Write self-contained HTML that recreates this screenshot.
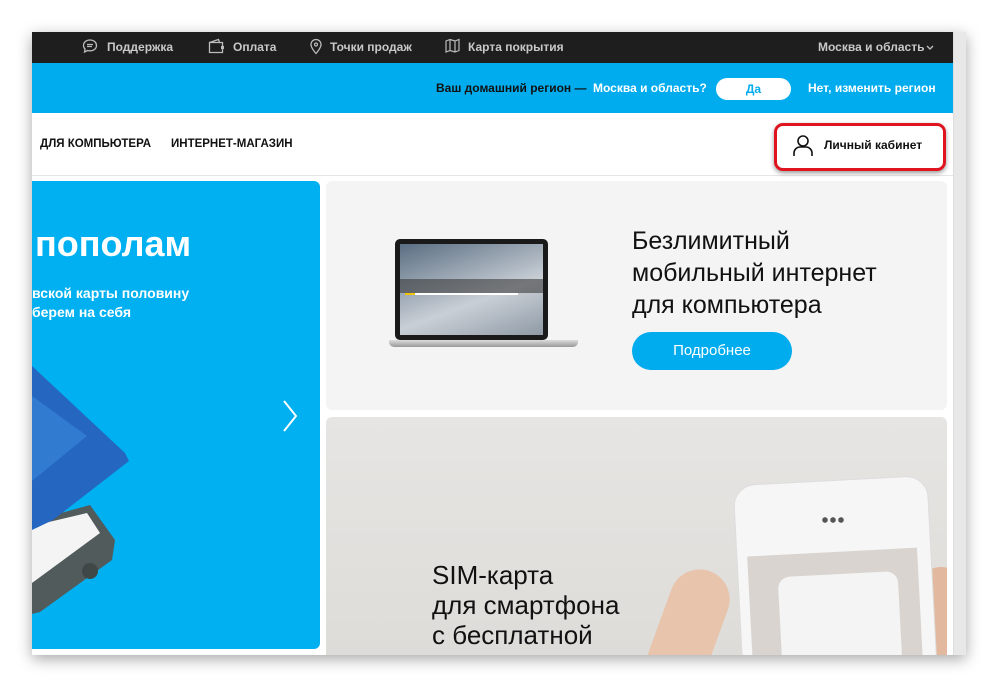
<!DOCTYPE html>
<html><head><meta charset="utf-8"><style>
*{margin:0;padding:0;box-sizing:border-box}
html,body{width:996px;height:686px;overflow:hidden}
body{background:#fff;font-family:"Liberation Sans",sans-serif;position:relative}
.frame{position:absolute;left:32px;top:32px;width:934px;height:623px;overflow:hidden;background:#fff;box-shadow:0 4px 14px rgba(0,0,0,.35)}
.top{position:absolute;left:0;top:0;width:921px;height:31px;background:#1e1e1e;color:#c8c8c8;font-size:12px;font-weight:bold}
.top span{position:absolute;top:8px}
.blue{position:absolute;left:0;top:31px;width:921px;height:50px;background:#00acee;color:#fff;font-size:12px;font-weight:bold}
.nav{position:absolute;left:0;top:81px;width:921px;height:63px;border-bottom:1px solid #e6e6e6;font-size:11.5px;font-weight:bold;color:#111}
.scroll{position:absolute;left:921px;top:0;width:13px;height:623px;background:#e8e8e8;border-left:1px solid #ddd}
.abs{position:absolute}
</style></head><body>
<div class="frame">
 <div class="top">
  <svg class="abs" style="left:50px;top:6px" width="16" height="16" viewBox="0 0 16 16"><path d="M8 2C4 2 1.5 4.5 1.5 7.5c0 1.5.6 2.7 1.6 3.6L2.5 14l3.2-1.5c.7.2 1.500.3 2.3.3 4 0 6.5-2.4 6.5-5.3S12 2 8 2z" fill="none" stroke="#bbb" stroke-width="1.3"/><path d="M5 6.5h6M5 8.5h5" stroke="#bbb" stroke-width="1.2"/></svg>
  <span style="left:75px">Поддержка</span>
  <svg class="abs" style="left:176px;top:5px" width="18" height="18" viewBox="0 0 18 18"><path d="M1.5 5.5h13v10h-13zM1.5 5.5l9-3 1 3" fill="none" stroke="#bbb" stroke-width="1.3"/><rect x="13" y="9" width="3" height="3" fill="#bbb"/></svg>
  <span style="left:201px">Оплата</span>
  <svg class="abs" style="left:277px;top:6px" width="14" height="17" viewBox="0 0 14 17"><path d="M7 1.5a5 5 0 0 0-5 5c0 3.5 5 9 5 9s5-5.5 5-9a5 5 0 0 0-5-5z" fill="none" stroke="#bbb" stroke-width="1.3"/><circle cx="7" cy="6.5" r="1.5" fill="none" stroke="#bbb" stroke-width="1.2"/></svg>
  <span style="left:298px">Точки продаж</span>
  <svg class="abs" style="left:413px;top:6px" width="15" height="16" viewBox="0 0 15 16"><path d="M1 3l4-1.5 5 1.5 4-1.5v11l-4 1.5-5-1.5-4 1.5zM5 1.5v11M10 3v11" fill="none" stroke="#bbb" stroke-width="1.2"/></svg>
  <span style="left:436px">Карта покрытия</span>
  <span style="left:786px">Москва и область</span>
  <svg class="abs" style="left:894px;top:13px" width="8" height="6" viewBox="0 0 8 6"><path d="M1 1l3 3 3-3" fill="none" stroke="#bbb" stroke-width="1.4"/></svg>
 </div>
 <div class="blue">
  <span class="abs" style="left:404px;top:18px;color:#111">Ваш домашний регион —</span>
  <span class="abs" style="left:561px;top:18px">Москва и область?</span>
  <div class="abs" style="left:684px;top:15px;width:75px;height:22px;background:#fff;border-radius:11px;color:#00acee;text-align:center;line-height:22px">Да</div>
  <span class="abs" style="left:776px;top:18px">Нет, изменить регион</span>
 </div>
 <div class="nav">
  <span class="abs" style="left:8px;top:25px">ДЛЯ КОМПЬЮТЕРА</span>
  <span class="abs" style="left:139px;top:25px">ИНТЕРНЕТ-МАГАЗИН</span>
  <div class="abs" style="left:742px;top:10px;width:172px;height:48px;border:3px solid #e0141e;border-radius:9px;box-shadow:0 2px 5px rgba(0,0,0,.4);background:#fff">
   <svg class="abs" style="left:15px;top:8px" width="22" height="24" viewBox="0 0 22 24"><circle cx="11" cy="7" r="5" fill="none" stroke="#111" stroke-width="1.6"/><path d="M2 22v-3a6 6 0 0 1 6-6h6a6 6 0 0 1 6 6v3" fill="none" stroke="#111" stroke-width="1.6"/></svg>
   <span class="abs" style="left:47px;top:12px;font-size:12px">Личный кабинет</span>
  </div>
 </div>
 <div class="abs" style="left:0;top:149px;width:288px;height:468px;background:#00b0f0;border-radius:0 6px 6px 0;overflow:hidden">
  <div class="abs" style="left:3px;top:42px;color:#fff;font-size:36px;font-weight:bold">пополам</div>
  <div class="abs" style="left:0;top:103px;color:#fff;font-size:14px;font-weight:bold;line-height:19px">вской карты половину<br>берем на себя</div>
  <svg class="abs" style="left:0;top:0" width="288" height="468">
   <polygon points="0,340 58,324 83,359 80,379 8,431 0,433" fill="#515b5b"/>
   <polygon points="0,345 55,332 68,352 0,402" fill="#f4f4f4"/>
   <circle cx="58" cy="390" r="8" fill="#3f4747"/>
   <polygon points="0,185 93,272 97,280 21,339 0,349" fill="#2566c0"/>
   <polygon points="0,215 55,255 0,300" fill="#3b88dc" opacity=".6"/>
  </svg>
  <svg class="abs" style="left:250px;top:218px" width="16" height="34" viewBox="0 0 16 34"><path d="M2 2l12 15L2 32" fill="none" stroke="#fff" stroke-width="2"/></svg>
 </div>
 <div class="abs" style="left:294px;top:149px;width:621px;height:229px;background:#f4f4f4;border-radius:6px">
  <div class="abs" style="left:69px;top:58px;width:153px;height:101px;background:#1a1a1a;border-radius:5px">
   <div class="abs" style="left:5px;top:5px;width:143px;height:91px;background:linear-gradient(160deg,#5a6e82,#c9cfd6 60%,#8f9aa6)"></div>
   <div class="abs" style="left:5px;top:40px;width:143px;height:14px;background:rgba(60,60,60,.6)"></div>
   <div class="abs" style="left:10px;top:54px;width:113px;height:2px;background:#fff"></div>
   <div class="abs" style="left:10px;top:54px;width:10px;height:2px;background:#f5c400"></div>
  </div>
  <div class="abs" style="left:63px;top:159px;width:189px;height:7px;background:linear-gradient(#ddd,#999);border-radius:0 0 5px 5px"></div>
  <div class="abs" style="left:306px;top:44px;font-size:25px;line-height:32px;color:#111">Безлимитный<br>мобильный интернет<br>для компьютера</div>
  <div class="abs" style="left:306px;top:151px;width:160px;height:38px;background:#00acee;border-radius:19px;color:#fff;font-size:15px;text-align:center;line-height:38px">Подробнее</div>
 </div>
 <div class="abs" style="left:294px;top:385px;width:621px;height:240px;background:linear-gradient(180deg,#e6e5e3,#dedcd8);border-radius:6px 6px 0 0;overflow:hidden">
  <div class="abs" style="left:330px;top:150px;width:60px;height:140px;background:#e8c4ad;border-radius:30px;transform:rotate(20deg)"></div>
  <div class="abs" style="left:590px;top:150px;width:50px;height:120px;background:#e2b89e;border-radius:25px"></div>
  <div class="abs" style="left:412px;top:63px;width:195px;height:210px;background:#f6f6f6;border-radius:22px;transform:rotate(-3deg);border:1px solid #ddd"></div>
  <div class="abs" style="left:425px;top:135px;width:170px;height:150px;background:#d9d4cf;transform:rotate(-3deg)"></div>
  <div class="abs" style="left:455px;top:157px;width:120px;height:130px;background:#f4f4f4;border-radius:12px;transform:rotate(-3deg)"></div>
  <div class="abs" style="left:495px;top:100px;width:24px;height:6px;background:radial-gradient(circle,#555 2.5px,transparent 3px) 0 0/8px 6px"></div>
  <div class="abs" style="left:106px;top:143px;font-size:26px;line-height:30px;color:#111">SIM-карта<br>для смартфона<br>с бесплатной</div>
 </div>
 <div class="scroll"></div>
</div>
</body></html>
